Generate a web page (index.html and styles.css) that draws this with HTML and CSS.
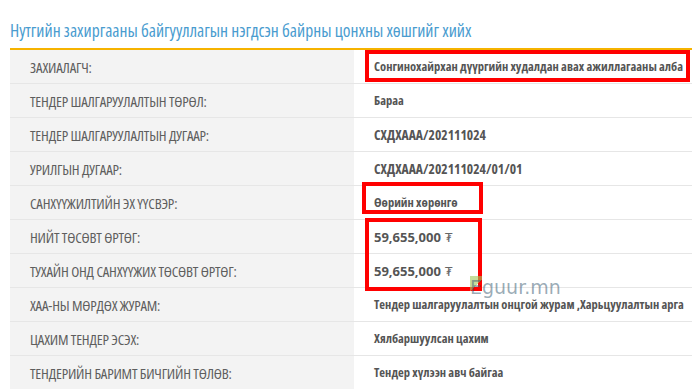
FILE: index.html
```html
<!DOCTYPE html>
<html lang="mn">
<head>
<meta charset="utf-8">
<link rel="stylesheet" href="styles.css">
</head>
<body>
<div class="page">
  <h1 class="title">Нутгийн захиргааны байгууллагын нэгдсэн байрны цонхны хөшгийг хийх</h1>
  <div class="table">
    <div class="row"><div class="label">ЗАХИАЛАГЧ:</div><div class="value">Сонгинохайрхан дүүргийн худалдан авах ажиллагааны алба</div></div>
    <div class="row"><div class="label">ТЕНДЕР ШАЛГАРУУЛАЛТЫН ТӨРӨЛ:</div><div class="value">Бараа</div></div>
    <div class="row"><div class="label">ТЕНДЕР ШАЛГАРУУЛАЛТЫН ДУГААР:</div><div class="value"><span class="code">СХДХААА/202111024</span></div></div>
    <div class="row"><div class="label">УРИЛГЫН ДУГААР:</div><div class="value"><span class="code">СХДХААА/202111024/01/01</span></div></div>
    <div class="row"><div class="label">САНХҮҮЖИЛТИЙН ЭХ ҮҮСВЭР:</div><div class="value">Өөрийн хөрөнгө</div></div>
    <div class="row"><div class="label">НИЙТ ТӨСӨВТ ӨРТӨГ:</div><div class="value"><span class="num">59,655,000</span> <span class="cur">₮</span></div></div>
    <div class="row"><div class="label">ТУХАЙН ОНД САНХҮҮЖИХ ТӨСӨВТ ӨРТӨГ:</div><div class="value"><span class="num">59,655,000</span> <span class="cur">₮</span></div></div>
    <div class="row"><div class="label">ХАА-НЫ МӨРДӨХ ЖУРАМ:</div><div class="value">Тендер шалгаруулалтын онцгой журам ,Харьцуулалтын арга</div></div>
    <div class="row"><div class="label">ЦАХИМ ТЕНДЕР ЭСЭХ:</div><div class="value">Хялбаршуулсан цахим</div></div>
    <div class="row"><div class="label">ТЕНДЕРИЙН БАРИМТ БИЧГИЙН ТӨЛӨВ:</div><div class="value">Тендер хүлээн авч байгаа</div></div>
  </div>
  <div class="mark box1"></div>
  <div class="mark box2"></div>
  <div class="mark box3"></div>
  <div class="watermark"><span class="wm-e">E</span>guur.mn</div>
</div>
</body>
</html>
```
FILE: styles.css
```css
html, body {
  margin: 0;
  padding: 0;
  background: #ffffff;
}
.page {
  position: relative;
  width: 692px;
  height: 389px;
  overflow: hidden;
  font-family: "Open Sans", "DejaVu Sans", sans-serif;
  font-stretch: 75%;
}
.title {
  margin: 0;
  padding: 18px 0 0 10px;
  height: 48px;
  box-sizing: border-box;
  font-size: 17.5px;
  font-weight: normal;
  color: #4a9ccf;
  line-height: 24px;
  white-space: nowrap;
}
.table {
  margin-left: 10px;
  border-top: 2px solid #f6b300;
}
.row {
  display: grid;
  grid-template-columns: 344px 1fr;
  height: 34px;
  border-bottom: 1px solid #e6e6e6;
  box-sizing: border-box;
}
.label {
  background: #f3f3f3;
  color: #5e5e5e;
  font-size: 14.8px;
  letter-spacing: -0.2px;
  padding-left: 20px;
  display: flex;
  align-items: center;
  white-space: nowrap;
}
.value {
  color: #555555;
  font-size: 12.5px;
  font-weight: bold;
  padding-left: 20px;
  display: flex;
  align-items: center;
  white-space: nowrap;
  overflow: hidden;
}
.code {
  font-size: 13.6px;
}
.num {
  font-stretch: 90%;
  font-size: 13px;
}
.cur {
  font-weight: normal;
  color: #666666;
  margin-left: 4px;
  font-size: 13px;
}
.mark {
  position: absolute;
  border: 4px solid #ff0000;
  box-sizing: border-box;
}
.box1 { left: 365px; top: 50px; width: 325px; height: 32px; }
.box2 { left: 362px; top: 182px; width: 121px; height: 32px; }
.box3 { left: 365px; top: 218px; width: 117px; height: 73px; }
.watermark {
  position: absolute;
  left: 470px;
  top: 276px;
  font-family: "DejaVu Sans", sans-serif;
  font-stretch: normal;
  font-size: 19px;
  color: rgba(70, 100, 120, 0.55);
}
.wm-e {
  background: linear-gradient(135deg, rgba(160, 200, 90, 0.6) 0 45%, transparent 45%);
}
```
